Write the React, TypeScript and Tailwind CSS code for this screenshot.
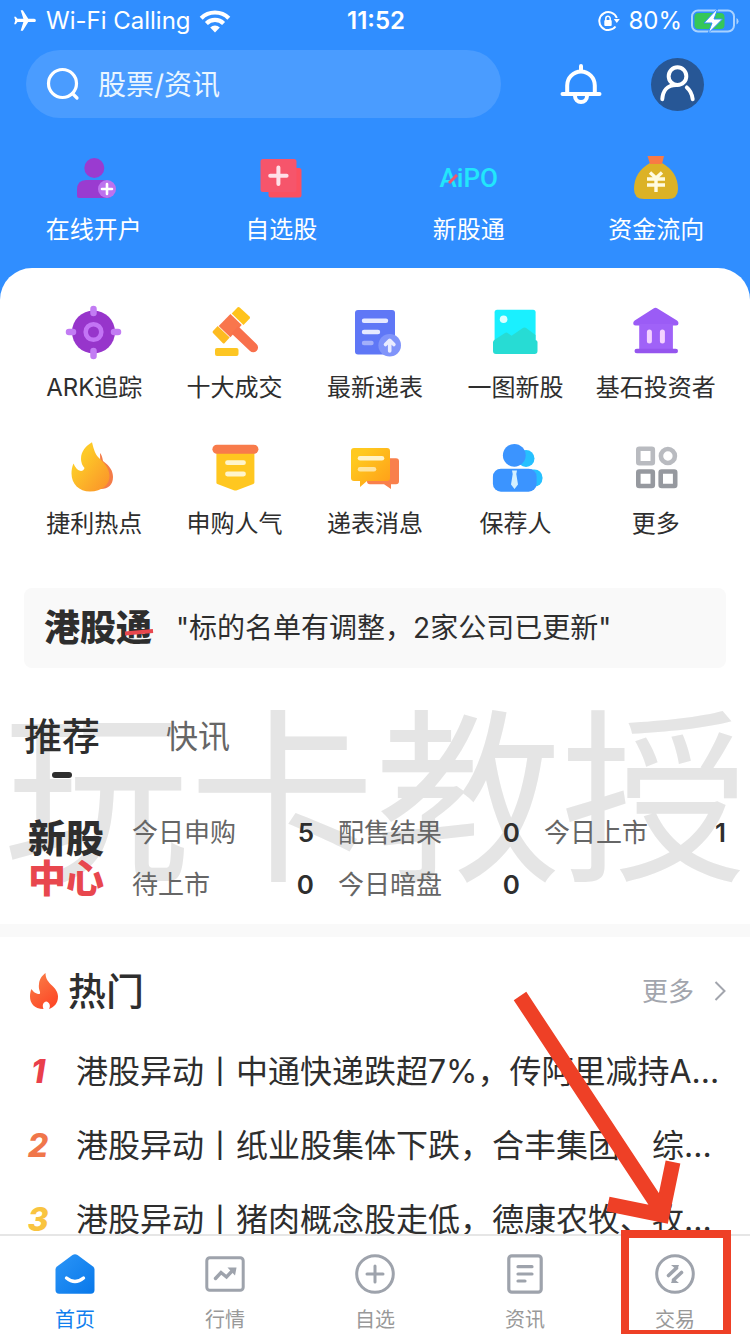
import type { ReactNode } from 'react'

type Entry = { label: string; icon: ReactNode }

const ICON = 'block h-14 w-14 overflow-visible'

const quickLinks: Entry[] = [
  {
    label: '在线开户',
    icon: (
      <svg viewBox="0 0 56 56" className={ICON} aria-hidden="true">
        <circle cx="28.3" cy="18" r="10" fill="#9a3bd0" />
        <path d="M20 30h16q8 0 8 9v9H13q-2 0-2-2v-6q0-10 9-10z" fill="#9a3bd0" />
        <circle cx="41" cy="39" r="9" fill="#bd72ee" />
        <path d="M41 34v10M36 39h10" stroke="#fff" strokeWidth="2.6" strokeLinecap="round" />
      </svg>
    ),
  },
  {
    label: '自选股',
    icon: (
      <svg viewBox="0 0 56 56" className={ICON} aria-hidden="true">
        <rect x="15.5" y="18" width="33" height="29.5" rx="2.5" fill="#fb5060" />
        <rect x="7.5" y="9" width="36" height="33" rx="2.5" fill="#f6556b" />
        <path d="M25.4 17.5v16.4M17.2 25.7h16.4" stroke="#ffe0e8" strokeWidth="4" strokeLinecap="round" />
      </svg>
    ),
  },
  {
    label: '新股通',
    icon: (
      <span className="relative flex h-14 items-center text-[26px] leading-none font-medium text-[#22e6fb] font-['Roboto',sans-serif]">
        AiPO
        <svg viewBox="0 0 10 10" className="absolute top-6 left-2 h-2.5 w-2.5" aria-hidden="true">
          <path d="M1 9 9 1" stroke="#f2556b" strokeWidth="3" />
        </svg>
      </span>
    ),
  },
  {
    label: '资金流向',
    icon: (
      <svg viewBox="0 0 56 56" className={ICON} aria-hidden="true">
        <path d="M22 13h12q16 9 16 26 0 10-10 10H16Q6 49 6 39q0-17 16-26z" fill="#dcb226" />
        <path d="M19.5 6h16.5l-2 8H22z" fill="#f97a45" />
        <path d="M22 22.5l6 5.5 6-5.5M19 29h18M19 35h18M28 28v14" fill="none" stroke="#fffbe0" strokeWidth="3.4" />
      </svg>
    ),
  },
]

const services: Entry[] = [
  {
    label: 'ARK追踪',
    icon: (
      <svg viewBox="0 0 56 56" className={ICON} aria-hidden="true">
        <circle cx="27.5" cy="28" r="21.5" fill="#9735cb" />
        <circle cx="27.5" cy="28" r="7.8" fill="none" stroke="#c374f5" strokeWidth="4.6" />
        <path d="M27.5 5v4M27.5 47v5M3 28h4M48 28h4" stroke="#c27cf3" strokeWidth="6.5" strokeLinecap="round" />
      </svg>
    ),
  },
  {
    label: '十大成交',
    icon: (
      <svg viewBox="0 0 56 56" className={ICON} aria-hidden="true">
        <path d="M23.4 10 34.7 21 23.4 33.3 11.7 22z" fill="#f9764c" />
        <path d="M24.5 29.5 31 22l18.500 18a4.700 4.700 0 0 1-6.500 7z" fill="#f8704c" />
        <path d="M30.7 3.3q1-.6 2 .3l9.8 9q1 1 .2 2L36.5 21 24.700 9.5z" fill="#ffc31c" />
        <path d="M10.700 22 22.700 33.5l-5 5.500q-1 1-2 0L6 29q-1-1 0-2z" fill="#fdbb20" />
        <rect x="8" y="44" width="23.5" height="8" rx="2" fill="#fdc623" />
      </svg>
    ),
  },
  {
    label: '最新递表',
    icon: (
      <svg viewBox="0 0 56 56" className={ICON} aria-hidden="true">
        <rect x="8" y="6" width="40" height="44.5" rx="3" fill="#5f77f6" />
        <g stroke="#e6e9ff" strokeWidth="4.4" strokeLinecap="round">
          <path d="M17 16.7h22M17 28h14" />
          <path d="M17 39h7.5" opacity=".5" />
        </g>
        <circle cx="42.7" cy="41.3" r="11.3" fill="#8094fa" />
        <path d="M42.7 47V36.5M38.500 40.500l4.200-4.200 4.200 4.200" fill="none" stroke="#e9ecff" strokeWidth="3.6" strokeLinecap="round" strokeLinejoin="round" />
      </svg>
    ),
  },
  {
    label: '一图新股',
    icon: (
      <svg viewBox="0 0 56 56" className={ICON} aria-hidden="true">
        <rect x="7.6" y="5.7" width="41" height="42" rx="2.5" fill="#1af0ff" />
        <circle cx="16.6" cy="15.3" r="3.8" fill="#dcffff" />
        <path d="M6 38q.5-2 2-2.5l10-6.5q1.500-1 3 .2l3.500 2.600 11-7.600q2-1.500 4 0l9 6.800v5q2 .5 2 2V47q0 3-3 3H9q-3 0-3-3z" fill="#27dcd4" />
      </svg>
    ),
  },
  {
    label: '基石投资者',
    icon: (
      <svg viewBox="0 0 56 56" className={ICON} aria-hidden="true">
        <path d="M25.5 4.5q2-1.400 4 0l19.500 12q1.500 1 1.500 2.700 0 2.300-2.300 2.300H7.500q-2.300 0-2.300-2.300 0-1.700 1.500-2.700z" fill="#9b5cf6" />
        <path d="M11.2 20h33.7v26H11.2z" fill="#a062f8" />
        <rect x="6.5" y="44.7" width="43.5" height="4.6" rx="2.3" fill="#9555ee" />
        <path d="M21.4 28v9M34.4 28v9" stroke="#f4d2ff" strokeWidth="5" strokeLinecap="round" />
      </svg>
    ),
  },
  {
    label: '捷利热点',
    icon: (
      <svg viewBox="0 0 56 56" className={ICON} aria-hidden="true">
        <defs>
          <linearGradient id="blaze" x1="0" y1="0" x2="1" y2="1">
            <stop offset=".3" stopColor="#fdc928" />
            <stop offset="1" stopColor="#fb8f2a" />
          </linearGradient>
        </defs>
        <path d="M34 13q2 2 3 8c7 5 10 10 10 16 0 8-5 12-12 12z" fill="#f47c48" />
        <path d="M26 2.300C20 6 15 11 15 19q0 5 3.500 9-1 3-3.500 3-5-1-7.500-7.500c-1.500 3-2 7-2 10C5.500 44 13 51.500 24 51.500c12 0 20-7 19.500-16C43 27 37 22 33 18c-4-4-5-8-7-15.700z" fill="url(#blaze)" />
      </svg>
    ),
  },
  {
    label: '申购人气',
    icon: (
      <svg viewBox="0 0 56 56" className={ICON} aria-hidden="true">
        <path d="M9.4 9h38v33.500q0 1-1 1.400L30 50.300q-1.600.6-3.200 0L10.400 44q-1-.5-1-1.500z" fill="#ffc720" />
        <rect x="5.4" y="4.7" width="46" height="9" rx="4.5" fill="#f87b4b" />
        <path d="M20.5 22.700h16M20.500 34h16" stroke="#fff5cc" strokeWidth="4.8" strokeLinecap="round" />
      </svg>
    ),
  },
  {
    label: '递表消息',
    icon: (
      <svg viewBox="0 0 56 56" className={ICON} aria-hidden="true">
        <defs>
          <linearGradient id="bubble" x1="0" y1="0" x2="1" y2="1">
            <stop offset=".2" stopColor="#ffc91f" />
            <stop offset="1" stopColor="#ff9d18" />
          </linearGradient>
        </defs>
        <path d="M20 18.300h29q3 0 3 3v20q0 3-3 3h-5V49l-7-4.700H23q-3 0-3-3z" fill="#f9804c" />
        <path d="M7 8h33q3 0 3 3v27q0 3-3 3H20l-7 6v-6H7q-3 0-3-3V11q0-3 3-3z" fill="url(#bubble)" />
        <g stroke="#fff3c9" strokeWidth="4.5" strokeLinecap="round">
          <path d="M13 18.300h22" />
          <path d="M13 29.300h14" opacity=".75" />
        </g>
      </svg>
    ),
  },
  {
    label: '保荐人',
    icon: (
      <svg viewBox="0 0 56 56" className={ICON} aria-hidden="true">
        <circle cx="39" cy="18.5" r="8.5" fill="#26c0ff" />
        <rect x="30" y="29.5" width="25.5" height="17" rx="8" fill="#26c0ff" />
        <circle cx="27.3" cy="15.3" r="11.4" fill="#3b94ff" />
        <rect x="5.9" y="28.7" width="43.7" height="23" rx="8" fill="#3b94ff" />
        <path d="M25 30.500h5l-.7 3.500 1.700 10.500-3.500 4.500-3.500-4.500L25.700 34z" fill="#d5f0ff" />
      </svg>
    ),
  },
  {
    label: '更多',
    icon: (
      <svg viewBox="0 0 56 56" className={ICON} fill="none" strokeWidth="4.6" aria-hidden="true">
        <rect x="10.3" y="8.8" width="14.5" height="14.5" rx="1" stroke="#b9bbc0" />
        <circle cx="39.9" cy="16" r="7" stroke="#b9bbc0" />
        <rect x="10.3" y="31.5" width="14.5" height="14.5" rx="1" stroke="#96999f" />
        <rect x="32.7" y="31.5" width="14.5" height="14.5" rx="1" stroke="#96999f" />
      </svg>
    ),
  },
]

const ipoStats = [
  { label: '今日申购', value: 5 },
  { label: '配售结果', value: 0 },
  { label: '今日上市', value: 1 },
  { label: '待上市', value: 0 },
  { label: '今日暗盘', value: 0 },
]

const hotNews = [
  { title: '港股异动丨中通快递跌超7%，传阿里减持A...', color: 'text-[#e93f4b]' },
  { title: '港股异动丨纸业股集体下跌，合丰集团、综...', color: 'text-[#f0764a]' },
  { title: '港股异动丨猪肉概念股走低，德康农牧、牧...', color: 'text-[#f9c440]' },
]

const TAB_ICON = 'block h-10 w-10'

const tabs: Entry[] = [
  {
    label: '首页',
    icon: (
      <svg viewBox="0 0 40 40" className={TAB_ICON} aria-hidden="true">
        <defs>
          <linearGradient id="home" x1="0" y1="0" x2="1" y2="1">
            <stop offset="0" stopColor="#2b95f7" />
            <stop offset="1" stopColor="#0878ea" />
          </linearGradient>
        </defs>
        <path d="M17.500 1q2.500-1.500 5 0L38 12.500q1.500 1.200 1.500 3V36q0 3.700-3.700 3.700H4.200Q.5 39.700.5 36V15.500q0-1.800 1.500-3z" fill="url(#home)" />
        <path d="M11.500 24q8.500 7 17 0" fill="none" stroke="#fff" strokeWidth="3.4" strokeLinecap="round" />
      </svg>
    ),
  },
  {
    label: '行情',
    icon: (
      <svg viewBox="0 0 40 40" className={TAB_ICON} fill="none" stroke="#9ea3ac" strokeWidth="3" aria-hidden="true">
        <rect x="1.8" y="3.8" width="36.4" height="32.5" rx="3" />
        <path d="M10.500 24.500 16 18.500l5.500 4.500 6-6.500" strokeLinecap="round" strokeWidth="3.4" />
        <path d="M22.500 13.500h9l-1.500 8z" fill="#9ea3ac" stroke="none" />
      </svg>
    ),
  },
  {
    label: '自选',
    icon: (
      <svg viewBox="0 0 40 40" className={TAB_ICON} fill="none" stroke="#9ea3ac" strokeWidth="3" aria-hidden="true">
        <circle cx="20" cy="20" r="18.3" />
        <path d="M20 12v16M12 20h16" strokeLinecap="round" />
      </svg>
    ),
  },
  {
    label: '资讯',
    icon: (
      <svg viewBox="0 0 40 40" className={TAB_ICON} fill="none" stroke="#9ea3ac" strokeWidth="3.2" aria-hidden="true">
        <rect x="3.8" y="1.8" width="32.4" height="36.4" rx="3" />
        <path d="M13 12.700h14M13 20h14M13 27h7" strokeLinecap="round" />
      </svg>
    ),
  },
  {
    label: '交易',
    icon: (
      <svg viewBox="0 0 40 40" className={TAB_ICON} fill="none" stroke="#9ea3ac" strokeWidth="3" aria-hidden="true">
        <circle cx="20" cy="20" r="18.3" />
        <path d="M13.500 21.500 21.500 14M26.500 18.500 18.500 26" strokeWidth="3.6" strokeLinecap="round" />
        <path d="M16 11h8l-2 5zM24 29h-8l2-5z" fill="#9ea3ac" stroke="none" />
      </svg>
    ),
  },
]

export default function App() {
  return (
    <div className="relative flex h-screen flex-col overflow-hidden bg-[#308eff] text-[#2e2e2e] font-['Inter','Noto_Sans_CJK_SC',sans-serif]">
      <div className="flex-1 overflow-hidden">
        <StatusBar />
        <SearchRow />

        <nav className="mt-8 grid grid-cols-4 pb-[22px] text-white">
          {quickLinks.map(q => (
            <EntryButton key={q.label} entry={q} gap="gap-2" />
          ))}
        </nav>

        <main className="min-h-full rounded-t-[32px] bg-white pt-9">
          <div className="grid grid-cols-5 gap-y-9 px-6">
            {services.map(s => (
              <EntryButton key={s.label} entry={s} gap="gap-3" />
            ))}
          </div>

          {/* Notice */}
          <a href="#notice" className="mx-6 mt-12 flex h-20 items-center gap-6 rounded-lg bg-[#f9f9f9] px-5">
            <span className="relative text-4xl font-black">
              港股通
              <svg viewBox="0 0 28 8" className="absolute top-5 right-0 h-2 w-7 overflow-visible" aria-hidden="true">
                <path d="M1 5.500 29 3" stroke="#e8474e" strokeWidth="4" />
              </svg>
            </span>
            <span className="truncate text-[28px]">"标的名单有调整，2家公司已更新"</span>
          </a>

          <section className="relative isolate">
            <div className="absolute top-10 left-0 -z-10 w-full text-center text-[186px] leading-[184px] whitespace-nowrap text-[#e5e5e5]" aria-hidden="true">
              玩卡教授
            </div>

            <div className="flex gap-[66px] px-6 pt-11">
              <button type="button" className="flex flex-col items-center gap-3">
                <span className="text-[38px] leading-[48px] font-medium">推荐</span>
                <span className="h-1.5 w-5 rounded-full bg-[#2e2e2e]" />
              </button>
              <button type="button" className="self-start text-[32px] leading-[50px] text-[#666]">快讯</button>
            </div>

            <div className="mt-7 flex items-center gap-7 pr-6 pl-7">
              <div className="text-[38px] leading-10 font-black">
                <div>新股</div>
                <div className="text-[#e8474e]">中心</div>
              </div>
              <dl className="grid flex-1 grid-cols-3 gap-x-6">
                {ipoStats.map(s => (
                  <div key={s.label} className="flex h-[52px] items-center justify-between text-[26px]">
                    <dt className="text-[#666]">{s.label}</dt>
                    <dd className="font-semibold">{s.value}</dd>
                  </div>
                ))}
              </dl>
            </div>
          </section>

          <div className="mt-[14px] h-[13px] bg-[#f9f9f9]" />

          {/* Hot list */}
          <section className="px-6">
            <header className="flex h-[98px] items-center pt-2.5">
              <svg viewBox="0 0 28 36" className="ml-1.5 h-9 w-7" aria-hidden="true">
                <defs>
                  <linearGradient id="hot" x1="0" y1="0" x2=".6" y2="1">
                    <stop offset="0" stopColor="#f9834a" />
                    <stop offset="1" stopColor="#fd4a28" />
                  </linearGradient>
                </defs>
                <path d="M15.500 0c0 6 3 9 6.500 12.500S28 19 28 23.500c0 7-4 10.500-9 12.500 2-3 .5-7-3-7.500-3 1-4 3.500-2.500 7.500C4 36 0 30 0 23.500c0-3 .5-5.500 1.500-7.500 1.500 2.500 4 5 8 5 2-1.500-1.500-4-.5-10C9.500 5.500 12 3 15.500 0z" fill="url(#hot)" />
              </svg>
              <h2 className="ml-2.5 text-[38px] font-medium">热门</h2>
              <a href="#more" className="ml-auto flex items-center gap-5 text-[26px] text-[#a2a5ad]">
                更多
                <svg viewBox="0 0 12 20" className="h-5 w-3" fill="none" stroke="currentColor" strokeWidth="2" aria-hidden="true">
                  <path d="m1.500 1 9 9-9 9" />
                </svg>
              </a>
            </header>
            <ol>
              {hotNews.map((n, i) => (
                <li key={n.title}>
                  <a href="#news" className="flex h-[74px] items-center">
                    <span className={`w-7 text-center text-[32px] font-extrabold italic ${n.color}`}>{i + 1}</span>
                    <span className="ml-6 flex-1 truncate text-[32px]">{n.title}</span>
                  </a>
                </li>
              ))}
            </ol>
          </section>
        </main>
      </div>

      <nav className="grid grid-cols-5 border-t-2 border-[#e6e6e6] bg-white pt-[18px]">
        {tabs.map((t, i) => (
          <button
            type="button"
            key={t.label}
            className={`relative flex flex-col items-center gap-3 text-xl leading-7 ${i === 0 ? 'text-[#117fee]' : 'text-[#999]'}`}
          >
            {t.icon}
            {t.label}
            {i === 4 && <span className="absolute -top-6 -bottom-1 left-[21px] w-[110px] border-8 border-[#ee4026]" />}
          </button>
        ))}
      </nav>

      {/* Arrow pointing at the trade tab */}
      <svg
        viewBox="0 0 180 240"
        className="pointer-events-none absolute right-[60px] bottom-[104px] h-[240px] w-[180px]"
        fill="none"
        stroke="#ee4026"
        strokeWidth="15"
        aria-hidden="true"
      >
        <path d="M10 6 151 220M98 214l54 11 11-53" />
      </svg>
    </div>
  )
}

function EntryButton({ entry, gap }: { entry: Entry; gap: string }) {
  return (
    <button type="button" className={`flex flex-col items-center text-2xl leading-8 whitespace-nowrap ${gap}`}>
      {entry.icon}
      {entry.label}
    </button>
  )
}

function StatusBar() {
  return (
    <div className="grid h-[42px] grid-cols-3 items-center pr-2.5 pl-3 text-2xl text-white">
      <div className="flex items-center gap-2 whitespace-nowrap">
        <svg viewBox="0 0 24 24" className="h-[26px] w-[26px] rotate-90" fill="currentColor" aria-hidden="true">
          <path d="M21 16v-2l-8-5V3.500c0-.83-.67-1.500-1.500-1.500S10 2.670 10 3.500V9l-8 5v2l8-2.500V19l-2 1.500V22l3.500-1 3.500 1v-1.500L13 19v-5.500l8 2.500z" />
        </svg>
        Wi-Fi Calling
        <svg viewBox="0 0 32 24" className="h-6 w-8" fill="none" stroke="currentColor" strokeWidth="4.2" aria-hidden="true">
          <path d="M2.200 9.200a19.500 19.500 0 0 1 27.600 0M7.400 14.400a12.200 12.200 0 0 1 17.200 0" />
          <path d="M16 23.500l-4.800-5a7 7 0 0 1 9.600 0z" fill="currentColor" stroke="none" />
        </svg>
      </div>
      <div className="text-center font-semibold">11:52</div>
      <div className="flex items-center justify-end gap-2">
        <svg viewBox="0 0 22 22" className="h-[22px] w-[22px]" fill="none" stroke="currentColor" strokeWidth="2" aria-hidden="true">
          <path d="M17.500 16.500A9 9 0 1 1 18.800 8" />
          <path d="M15.800 9h6l-3 4z" fill="currentColor" stroke="none" />
          <rect x="6.300" y="10" width="7.400" height="6" rx="1" fill="currentColor" stroke="none" />
          <path d="M7.800 10.500V8.500a2.200 2.200 0 0 1 4.400 0v2" strokeWidth="1.500" />
        </svg>
        80%
        <svg viewBox="0 0 50 26" className="h-[26px] w-[50px]" aria-hidden="true">
          <rect x="2" y="2.5" width="42" height="21" rx="6" fill="none" stroke="#a9d2ff" strokeWidth="2" />
          <path d="M46.500 10v6.500q2-1 2-3.200t-2-3.300z" fill="#a9d2ff" />
          <rect x="4.5" y="5" width="30" height="16" rx="4" fill="#35c75a" />
          <path d="M28 0 14 15h8l-4 10.500L32.500 11H24z" fill="#fff" stroke="#308eff" strokeWidth="1" />
        </svg>
      </div>
    </div>
  )
}

function SearchRow() {
  return (
    <div className="mt-2 mr-[46px] ml-[26px] flex items-center text-white">
      <label className="flex h-[68px] min-w-0 flex-1 items-center gap-[18px] rounded-full bg-[#4a9cff] pl-5">
        <svg viewBox="0 0 34 34" className="h-[34px] w-[34px] shrink-0" fill="none" stroke="currentColor" strokeWidth="3.2" strokeLinecap="round" aria-hidden="true">
          <circle cx="16.5" cy="16.5" r="14" />
          <path d="m26.500 26.500 4.500 4.500" />
        </svg>
        <input
          type="text"
          aria-label="股票/资讯"
          placeholder="股票/资讯"
          className="h-[68px] w-full min-w-0 bg-transparent pt-0.5 text-[28px] outline-none placeholder:text-[#eaf6ff]"
        />
      </label>
      <button type="button" aria-label="消息" className="ml-[58px]">
        <svg viewBox="0 0 44 44" className="h-11 w-11" fill="none" stroke="currentColor" strokeWidth="4" strokeLinecap="round">
          <path d="M3.500 32h37M8.200 31V23.500a13.800 14 0 0 1 27.600 0V31M22 9V4M16 34a6 6 0 0 0 12 0" />
        </svg>
      </button>
      <button type="button" aria-label="我的" className="ml-12 rounded-full bg-[#275796]">
        <svg viewBox="0 0 54 54" className="h-[53px] w-[53px]" fill="none" stroke="currentColor" strokeWidth="4" strokeLinecap="round">
          <circle cx="27" cy="18.5" r="9" />
          <path d="M11.500 42c.5-8 5-14.500 14-14.500M36.500 30q5 4 6 12" />
        </svg>
      </button>
    </div>
  )
}
